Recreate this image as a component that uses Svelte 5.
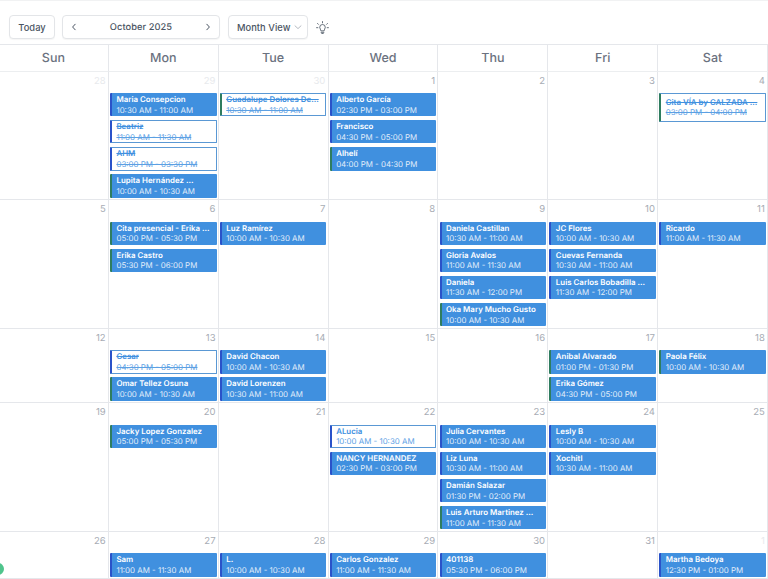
<script>
	const rows = [
		[
			{ day: 28, muted: true },
			{ day: 29, muted: true, events: [
				{ name: 'Maria Consepcion', time: '10:30 AM - 11:00 AM' },
				{ name: 'Beatriz', time: '11:00 AM - 11:30 AM', off: true },
				{ name: 'AHM', time: '03:00 PM - 03:30 PM', off: true },
				{ name: 'Lupita Hernández ...', time: '10:00 AM - 10:30 AM', green: true }
			] },
			{ day: 30, muted: true, events: [
				{ name: 'Guadalupe Dolores De...', time: '10:30 AM - 11:00 AM', off: true, green: true }
			] },
			{ day: 1, events: [
				{ name: 'Alberto García', time: '02:30 PM - 03:00 PM' },
				{ name: 'Francisco', time: '04:30 PM - 05:00 PM' },
				{ name: 'Alhelí', time: '04:00 PM - 04:30 PM', green: true }
			] },
			{ day: 2 },
			{ day: 3 },
			{ day: 4, events: [
				{ name: 'Cita VÍA by CALZADA ...', time: '03:00 PM - 04:00 PM', off: true, green: true, tall: true }
			] }
		],
		[
			{ day: 5 },
			{ day: 6, events: [
				{ name: 'Cita presencial - Erika ...', time: '05:00 PM - 05:30 PM', green: true },
				{ name: 'Erika Castro', time: '05:30 PM - 06:00 PM', green: true }
			] },
			{ day: 7, events: [{ name: 'Luz Ramírez', time: '10:00 AM - 10:30 AM' }] },
			{ day: 8 },
			{ day: 9, events: [
				{ name: 'Daniela Castillan', time: '10:30 AM - 11:00 AM' },
				{ name: 'Gloria Avalos', time: '11:00 AM - 11:30 AM' },
				{ name: 'Daniela', time: '11:30 AM - 12:00 PM' },
				{ name: 'Oka Mary Mucho Gusto', time: '10:00 AM - 10:30 AM', green: true }
			] },
			{ day: 10, events: [
				{ name: 'JC Flores', time: '10:00 AM - 10:30 AM' },
				{ name: 'Cuevas Fernanda', time: '10:30 AM - 11:00 AM' },
				{ name: 'Luis Carlos Bobadilla ...', time: '11:30 AM - 12:00 PM' }
			] },
			{ day: 11, events: [{ name: 'Ricardo', time: '11:00 AM - 11:30 AM' }] }
		],
		[
			{ day: 12 },
			{ day: 13, events: [
				{ name: 'Cesar', time: '04:30 PM - 05:00 PM', off: true },
				{ name: 'Omar Tellez Osuna', time: '10:00 AM - 10:30 AM', green: true }
			] },
			{ day: 14, events: [
				{ name: 'David Chacon', time: '10:00 AM - 10:30 AM' },
				{ name: 'David Lorenzen', time: '10:30 AM - 11:00 AM' }
			] },
			{ day: 15 },
			{ day: 16 },
			{ day: 17, events: [
				{ name: 'Anibal Alvarado', time: '01:00 PM - 01:30 PM', green: true },
				{ name: 'Erika Gómez', time: '04:30 PM - 05:00 PM', green: true }
			] },
			{ day: 18, events: [{ name: 'Paola Félix', time: '10:00 AM - 10:30 AM', green: true }] }
		],
		[
			{ day: 19 },
			{ day: 20, events: [{ name: 'Jacky Lopez Gonzalez', time: '05:00 PM - 05:30 PM', green: true }] },
			{ day: 21 },
			{ day: 22, events: [
				{ name: 'ALucia', time: '10:00 AM - 10:30 AM', outline: true },
				{ name: 'NANCY HERNANDEZ', time: '02:30 PM - 03:00 PM' }
			] },
			{ day: 23, events: [
				{ name: 'Julia Cervantes', time: '10:00 AM - 10:30 AM' },
				{ name: 'Liz Luna', time: '10:30 AM - 11:00 AM' },
				{ name: 'Damián Salazar', time: '01:30 PM - 02:00 PM' },
				{ name: 'Luis Arturo Martinez ...', time: '11:00 AM - 11:30 AM', green: true }
			] },
			{ day: 24, events: [
				{ name: 'Lesly B', time: '10:00 AM - 10:30 AM' },
				{ name: 'Xochitl', time: '10:30 AM - 11:00 AM' }
			] },
			{ day: 25 }
		],
		[
			{ day: 26 },
			{ day: 27, events: [{ name: 'Sam', time: '11:00 AM - 11:30 AM' }] },
			{ day: 28, events: [{ name: 'L.', time: '10:00 AM - 10:30 AM' }] },
			{ day: 29, events: [{ name: 'Carlos Gonzalez', time: '11:00 AM - 11:30 AM' }] },
			{ day: 30, events: [{ name: '401138', time: '05:30 PM - 06:00 PM' }] },
			{ day: 31 },
			{ day: 1, muted: true, events: [{ name: 'Martha Bedoya', time: '12:30 PM - 01:00 PM' }] }
		]
	];
	const weekdays = ['Sun', 'Mon', 'Tue', 'Wed', 'Thu', 'Fri', 'Sat'];
</script>

<div class="page">
	<div class="toolbar">
		<button class="btn today">Today</button>
		<div class="btn nav">
			<svg width="8" height="8" viewBox="0 0 8 8"><path d="M5.2 1.2 2.6 4l2.6 2.8" /></svg>
			<span>October 2025</span>
			<svg width="8" height="8" viewBox="0 0 8 8"><path d="M2.8 1.2 5.4 4 2.8 6.8" /></svg>
		</div>
		<button class="btn view">
			Month View
			<svg class="caret" width="8" height="8" viewBox="0 0 8 8"><path d="M1 2.8 4 5.6l3-2.8" /></svg>
		</button>
		<svg class="bulb" width="13" height="13" viewBox="0 0 14 14">
			<path d="M7 .6v1.4M1.6 2.6l1 1M12.4 2.6l-1 1M.6 7.2H2M12 7.2h1.4" />
			<path d="M5.3 10.2c0-1.2-1.3-1.7-1.3-3.4a3 3 0 0 1 6 0c0 1.700-1.300 2.200-1.300 3.400z" />
			<path d="M5.500 12.200h3M6.200 13.500h1.600" />
		</svg>
	</div>

	<div class="grid">
		{#each weekdays as name}
			<div class="weekday">{name}</div>
		{/each}
		{#each rows as row}
			{#each row as cell}
				<div class="cell">
					<div class="num" class:muted={cell.muted}>{cell.day}</div>
					{#each cell.events ?? [] as ev}
						<div class="event" class:green={ev.green} class:off={ev.off} class:outline={ev.outline} class:tall={ev.tall}>
							<div class="name">{ev.name}</div>
							<div class="time">{ev.time}</div>
						</div>
					{/each}
				</div>
			{/each}
		{/each}
	</div>

	<div class="dot"></div>
</div>

<style>
	:global(body) {
		margin: 0;
		background: #fff;
	}
	.page {
		position: relative;
		height: 579px;
		overflow: hidden;
		border-top: 1px solid #f1f2f3;
		box-sizing: border-box;
		font-family: Inter, "Liberation Sans", sans-serif;
		text-rendering: geometricPrecision;
	}
	.toolbar {
		display: flex;
		align-items: center;
		height: 43px;
		padding-left: 9px;
		box-sizing: border-box;
		padding-top: 9px;
	}
	.btn {
		display: flex;
		align-items: center;
		box-sizing: border-box;
		height: 24px;
		background: #fff;
		border: 1px solid #e3e5e8;
		border-radius: 4px;
		box-shadow: 0 1px 1px rgba(0, 0, 0, 0.04);
		font: 500 9.3px Inter, sans-serif;
		letter-spacing: 0.05px;
		color: #4b5563;
		padding: 0;
	}
	.today {
		width: 46px;
		justify-content: center;
		margin-right: 7px;
	}
	.nav {
		width: 158px;
		justify-content: space-between;
		padding: 0 7px;
		margin-right: 8px;
	}
	.view {
		width: 80px;
		padding-left: 8px;
		gap: 4px;
		white-space: nowrap;
	}
	svg path {
		fill: none;
		stroke: #4b5563;
		stroke-width: 1;
		stroke-linecap: round;
		stroke-linejoin: round;
	}
	.caret path {
		stroke: #a3a9b2;
		stroke-width: 0.8;
	}
	.bulb {
		margin-left: 8px;
	}
	.bulb path {
		stroke-width: 0.9;
	}
	.grid {
		display: grid;
		grid-template-columns: repeat(7, 1fr);
		width: 769px;
		margin-left: -1px;
		border-top: 1px solid #e5e7eb;
	}
	.weekday {
		height: 26.6px;
		padding-top: 1px;
		display: flex;
		align-items: center;
		justify-content: center;
		box-sizing: border-box;
		border-right: 1px solid #e5e7eb;
		border-bottom: 1px solid #eceef0;
		font-size: 12.5px;
		font-weight: 500;
		color: #6b7280;
	}
	.cell {
		min-width: 0;
		box-sizing: border-box;
		padding: 0 1.2px 1.6px;
		border-right: 1px solid #e5e7eb;
		border-bottom: 1px solid #e5e7eb;
	}
	.num {
		height: 21.4px;
		line-height: 19px;
		padding-right: 1px;
		text-align: right;
		font-size: 9.5px;
		color: #a8adb5;
	}
	.num.muted {
		color: #e8eaed;
	}
	.event {
		box-sizing: border-box;
		height: 23.4px;
		margin-bottom: 3.7px;
		padding: 0 2px 0 4.4px;
		background: #4090df;
		border-left: 2.6px solid #2a52c9;
		border-radius: 1px;
		color: #fff;
		font-size: 7.9px;
		line-height: 10.5px;
		display: flex;
		flex-direction: column;
		justify-content: center;
		white-space: nowrap;
		overflow: hidden;
	}
	.event:last-child {
		margin-bottom: 0;
	}
	.event.green {
		border-left-color: #2f7d5f;
	}
	.name {
		font-weight: 600;
	}
	.time {
		opacity: 0.85;
	}
	.event.off,
	.event.outline {
		background: #fff;
		color: #4090df;
		border-top: 1px solid #5a98d4;
		border-right: 1px solid #5a98d4;
		border-bottom: 1px solid #5a98d4;
		padding-right: 1px;
	}
	.event.off .name,
	.event.off .time {
		text-decoration: line-through;
	}
	.event.tall {
		height: 28.9px;
	}
	.dot {
		position: absolute;
		left: -8px;
		top: 562px;
		width: 12px;
		height: 12px;
		border-radius: 50%;
		background: #4fc48c;
	}
</style>
